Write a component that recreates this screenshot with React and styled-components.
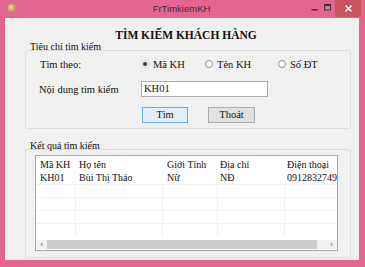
import React from "react";
import styled, { createGlobalStyle } from "styled-components";

const GlobalStyle = createGlobalStyle`
    html, body {
        margin: 0;
        padding: 0;
        background: #e2668f;
    }
`;

const columns = [
    { key: "ma", label: "Mã KH", width: 40, pad: 4 },
    { key: "ten", label: "Họ tên", width: 87, pad: 3 },
    { key: "gt", label: "Giới Tính", width: 55, pad: 4 },
    { key: "dc", label: "Địa chỉ", width: 67, pad: 2 },
    { key: "dt", label: "Điện thoại", width: 60, pad: 2 },
];

const rows = [{ ma: "KH01", ten: "Bùi Thị Thảo", gt: "Nữ", dc: "NĐ", dt: "0912832749" }];

const App = () => {
    return (
        <Window>
            <GlobalStyle />
            <TitleBar>
                <AppIcon />
                <Title>FrTimkiemKH</Title>
                <Controls>
                    <CtrlButton $width={14}>
                        <svg width="7" height="7" viewBox="0 0 7 7">
                            <rect x="0.5" y="5" width="6" height="1.5" fill="#3a3a3a" />
                        </svg>
                    </CtrlButton>
                    <CtrlButton $width={13}>
                        <svg width="7" height="7" viewBox="0 0 7 7">
                            <rect x="0.5" y="0.5" width="6" height="5.5" fill="none" stroke="#3a3a3a" strokeWidth="1" />
                            <rect x="0.5" y="0.5" width="6" height="1.5" fill="#3a3a3a" />
                        </svg>
                    </CtrlButton>
                    <CloseButton>
                        <svg width="7" height="7" viewBox="0 0 7 7">
                            <path d="M0.5 0.5 L6.5 6.5 M6.5 0.5 L0.5 6.5" stroke="#fff" strokeWidth="1.4" />
                        </svg>
                    </CloseButton>
                </Controls>
            </TitleBar>
            <Client>
                <Heading>TÌM KIẾM KHÁCH HÀNG</Heading>
                <Group>
                    <Legend>Tiêu chí tìm kiếm</Legend>
                    <GroupBody $height={79} $pad="5px 0 0 14px">
                        <FormRow>
                            <Label>Tìm theo:</Label>
                            <RadioGroup>
                                <Radio $width={64}>
                                    <Dot $checked />
                                    Mã KH
                                </Radio>
                                <Radio $width={73}>
                                    <Dot />
                                    Tên KH
                                </Radio>
                                <Radio>
                                    <Dot />
                                    Số ĐT
                                </Radio>
                            </RadioGroup>
                        </FormRow>
                        <FormRow $gap={9}>
                            <Label $shift={-1}>Nội dung tìm kiếm</Label>
                            <TextBox>KH01</TextBox>
                        </FormRow>
                        <ButtonRow>
                            <Button $focused $width={44}>
                                Tìm
                            </Button>
                            <Button $width={45}>Thoát</Button>
                        </ButtonRow>
                    </GroupBody>
                </Group>
                <Group $gap={11}>
                    <Legend>Kết quả tìm kiếm</Legend>
                    <GroupBody $height={109} $pad="5px 0 0 9px">
                        <ListView>
                            <Grid>
                                <GridRow>
                                    {columns.map((c) => (
                                        <Cell key={c.key} $width={c.width} $pad={c.pad}>
                                            {c.label}
                                        </Cell>
                                    ))}
                                </GridRow>
                                {rows.map((r) => (
                                    <GridRow key={r.ma}>
                                        {columns.map((c) => (
                                            <Cell key={c.key} $width={c.width} $pad={c.pad}>
                                                {r[c.key]}
                                            </Cell>
                                        ))}
                                    </GridRow>
                                ))}
                                {[0, 1, 2, 3].map((i) => (
                                    <GridRow key={i}>
                                        {columns.map((c) => (
                                            <Cell key={c.key} $width={c.width} $pad={c.pad} $lines />
                                        ))}
                                    </GridRow>
                                ))}
                            </Grid>
                            <ScrollBar>
                                <Arrow>‹</Arrow>
                                <Thumb />
                                <Arrow>›</Arrow>
                            </ScrollBar>
                        </ListView>
                    </GroupBody>
                </Group>
            </Client>
        </Window>
    );
};

const Window = styled.div`
    width: 365px;
    height: 267px;
    background: #e2668f;
    display: flex;
    flex-direction: column;
    padding: 0 6px 7px 5px;
    box-sizing: border-box;
    font-family: "Liberation Serif", "Times New Roman", serif;
    color: #111;
`;

const TitleBar = styled.div`
    height: 18px;
    display: flex;
    align-items: center;
`;

const AppIcon = styled.div`
    width: 8px;
    height: 8px;
    margin: -2px 0 0 3px;
    border-radius: 2px;
    background: radial-gradient(circle at 40% 40%, #f2dc98, #c79a72 55%, #7f8e99);
`;

const Title = styled.div`
    flex: 1;
    text-align: center;
    font-family: "Liberation Sans", Arial, sans-serif;
    font-size: 9.5px;
    color: #4a2633;
    margin: -1px 0 0 40px;
`;

const Controls = styled.div`
    display: flex;
    align-self: flex-start;
    height: 17px;
    margin-right: -2px;
`;

const CtrlButton = styled.div`
    width: ${(p) => p.$width}px;
    height: 14px;
    display: flex;
    align-items: center;
    justify-content: center;
`;

const CloseButton = styled.div`
    width: 26px;
    height: 17px;
    margin-left: 1px;
    background: #c9525c;
    display: flex;
    align-items: center;
    justify-content: center;
`;

const Client = styled.div`
    flex: 1;
    background: #f0f0f0;
    display: flex;
    flex-direction: column;
    padding: 10px 8px 0 20px;
`;

const Heading = styled.div`
    text-align: center;
    font-weight: bold;
    font-size: 11.5px;
    line-height: 14px;
    margin: 0 0 -1px -4px;
`;

const Group = styled.div`
    display: flex;
    flex-direction: column;
    margin-top: ${(p) => p.$gap || 0}px;
`;

const Legend = styled.div`
    font-size: 10px;
    line-height: 12px;
    padding: 0 2px 0 5px;
    margin-bottom: -3px;
    position: relative;
    z-index: 1;
    align-self: flex-start;
`;

const GroupBody = styled.div`
    border: 1px solid #dcdcdc;
    border-radius: 2px;
    height: ${(p) => p.$height}px;
    padding: ${(p) => p.$pad};
    box-sizing: border-box;
    display: flex;
    flex-direction: column;
`;

const FormRow = styled.div`
    display: flex;
    align-items: center;
    height: 16px;
    margin-top: ${(p) => p.$gap || 0}px;
    font-size: 10.5px;
`;

const Label = styled.div`
    width: 101px;
    margin-left: ${(p) => p.$shift || 0}px;
    margin-right: ${(p) => -(p.$shift || 0)}px;
`;

const RadioGroup = styled.div`
    display: flex;
    align-items: center;
`;

const Radio = styled.div`
    display: flex;
    align-items: center;
    width: ${(p) => (p.$width ? `${p.$width}px` : "auto")};
    gap: 4px;
`;

const Dot = styled.span`
    width: 6px;
    height: 6px;
    border-radius: 50%;
    border: 1px solid ${(p) => (p.$checked ? "#c8c8c8" : "#8e8f8f")};
    background: #fff;
    display: inline-flex;
    align-items: center;
    justify-content: center;
    &::after {
        content: "";
        width: 4px;
        height: 4px;
        border-radius: 50%;
        background: ${(p) => (p.$checked ? "#333" : "transparent")};
    }
`;

const TextBox = styled.div`
    width: 123px;
    height: 14px;
    border: 1px solid #ababab;
    background: #fff;
    line-height: 14px;
    padding-left: 2px;
`;

const ButtonRow = styled.div`
    display: flex;
    gap: 22px;
    padding-left: 102px;
    margin-top: 10px;
`;

const Button = styled.div`
    width: ${(p) => p.$width}px;
    height: 14px;
    box-sizing: content-box;
    border: 1px solid ${(p) => (p.$focused ? "#6fa9e0" : "#acacac")};
    background: ${(p) => (p.$focused ? "#e3eef9" : "#e1e1e1")};
    font-size: 10.5px;
    line-height: 14px;
    text-align: center;
    margin-right: -2px;
`;

const ListView = styled.div`
    width: 303px;
    height: 96px;
    box-sizing: border-box;
    border: 1px solid #a9a9a9;
    background: #fff;
    display: flex;
    flex-direction: column;
    overflow: hidden;
`;

const Grid = styled.div`
    flex: 1;
    padding-top: 2px;
    overflow: hidden;
`;

const GridRow = styled.div`
    display: flex;
    height: 13px;
    font-size: 10px;
    line-height: 13px;
    white-space: nowrap;
`;

const Cell = styled.div`
    width: ${(p) => p.$width}px;
    padding-left: ${(p) => p.$pad}px;
    flex-shrink: 0;
    box-sizing: border-box;
    border-top: ${(p) => (p.$lines ? "1px solid #f1f1f1" : "none")};
    border-right: ${(p) => (p.$lines ? "1px solid #f1f1f1" : "none")};
`;

const ScrollBar = styled.div`
    height: 9px;
    display: flex;
    align-items: center;
    background: #f0f0f0;
    margin: 0 0 1px 0;
`;

const Arrow = styled.div`
    width: 11px;
    font-size: 8px;
    line-height: 9px;
    color: #666;
    text-align: center;
    font-family: "DejaVu Sans", sans-serif;
`;

const Thumb = styled.div`
    width: 270px;
    height: 9px;
    background: #cdcdcd;
    margin-right: auto;
`;

export default App;
